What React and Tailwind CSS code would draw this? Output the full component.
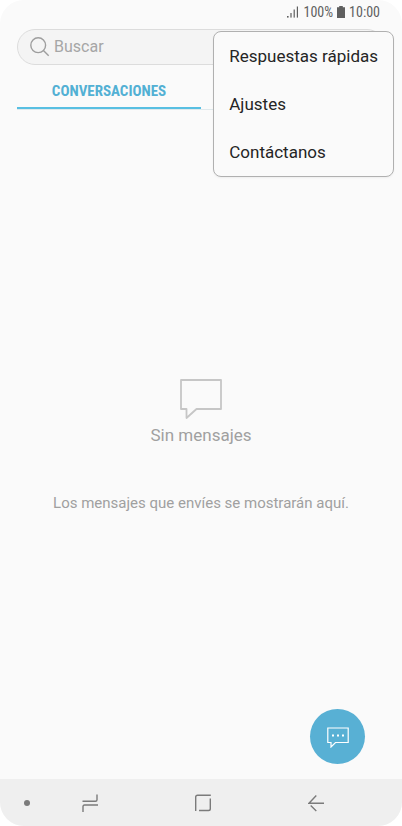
const menuItems = ['Respuestas rápidas', 'Ajustes', 'Contáctanos'];

const StatusBar = () => (
  <header className="flex h-6 items-center justify-end gap-1 pr-[22px] text-sm text-[#5f5f5f] font-['Roboto_Condensed','Roboto',sans-serif]">
    <svg className="h-3 w-3" viewBox="0 0 12 12" fill="currentColor" aria-hidden="true">
      <rect x="0" y="10" width="1.6" height="1.6" />
      <rect x="3.4" y="7" width="1.2" height="4.6" />
      <rect x="6.6" y="3.5" width="1.2" height="8.1" />
      <rect x="9.8" y="0.5" width="1.2" height="11.1" />
    </svg>
    <span>100%</span>
    <svg className="h-3 w-2" viewBox="0 0 8 12" fill="currentColor" aria-hidden="true">
      <path d="M2.2 0h3.6v1.2H8V12H0V1.2h2.2z" />
    </svg>
    <span>10:00</span>
  </header>
);

const SearchBar = () => (
  <label className="mx-[17px] mt-[5px] flex h-9 items-center gap-1 rounded-full border border-[#dcdcdc] bg-[#f4f4f4] pl-3">
    <svg className="h-5 w-5 shrink-0 text-[#9e9e9e]" viewBox="0 0 20 20" fill="none" stroke="currentColor" strokeWidth="1.4" aria-hidden="true">
      <circle cx="8.2" cy="8.2" r="7.4" />
      <path d="M13.4 13.4l5.3 5.3" />
    </svg>
    <input
      type="search"
      aria-label="Buscar"
      placeholder="Buscar"
      className="min-w-0 flex-1 bg-transparent text-base text-[#252525] outline-none placeholder:text-[#a6a6a6]"
    />
  </label>
);

const Tabs = () => (
  <nav className="mx-[17px] flex h-[45px] border-b border-[#dfe9ec]">
    <button type="button" className="w-1/2 border-b-2 border-[#58bfe2] pt-[10px] text-[15px] font-bold text-[#52b0d4] font-['Roboto_Condensed','Roboto',sans-serif]">
      CONVERSACIONES
    </button>
  </nav>
);

const OptionsMenu = () => (
  <ul className="absolute top-[31px] right-2 rounded-lg border border-[#b0b0b0] bg-[#fafafa] shadow-xs">
    {menuItems.map((item) => (
      <li key={item}>
        <button type="button" className="block h-12 w-full px-[15px] pt-[2px] text-left text-[17px] text-[#252525]">
          {item}
        </button>
      </li>
    ))}
  </ul>
);

const EmptyState = () => (
  <main className="flex flex-1 flex-col items-center justify-center pt-1 text-center text-[#a0a0a0]">
    <svg className="h-10 w-[42px] text-[#c6c6c6]" viewBox="0 0 42 40" fill="none" stroke="currentColor" strokeWidth="1.8" strokeLinejoin="round" aria-hidden="true">
      <path d="M1 1h40v29H16.500L6.500 39V30H1z" />
    </svg>
    <h1 className="mt-1 text-[17px] leading-6">Sin mensajes</h1>
    <p className="mt-11 text-[15px] leading-6">Los mensajes que envíes se mostrarán aquí.</p>
  </main>
);

const NavBar = () => (
  <footer className="flex h-[47px] items-center bg-[#efefef] text-[#7b7b7b]">
    <button type="button" aria-label="Ocultar barra" className="flex w-[54px] justify-center">
      <span className="h-[6px] w-[6px] rounded-full bg-current" />
    </button>
    <div className="flex flex-1 justify-between pr-[78px] pl-7">
      <button type="button" aria-label="Recientes">
        <svg className="h-[18px] w-4" viewBox="0 0 16 18" fill="none" stroke="currentColor" strokeWidth="1.4" aria-hidden="true">
          <path d="M0.5 7.3H13.5Q15 7.3 15 5.8V0.5M16 11H2.5Q1 11 1 12.5V18" />
        </svg>
      </button>
      <button type="button" aria-label="Inicio">
        <svg className="h-[18px] w-4" viewBox="0 0 16 18" fill="none" stroke="currentColor" strokeWidth="1.4" aria-hidden="true">
          <path d="M15.8 1.2H2.5Q0.7 1.2 0.7 3V17M4 16.5H13.5Q15.3 16.5 15.3 14.7V4.5" />
        </svg>
      </button>
      <button type="button" aria-label="Atrás">
        <svg className="h-[18px] w-4" viewBox="0 0 16 18" fill="none" stroke="currentColor" strokeWidth="1.4" aria-hidden="true">
          <path d="M16 9.3H1L8.3 1.5M2.7 11.5L8.3 17" />
        </svg>
      </button>
    </div>
  </footer>
);

const App = () => (
  <div className="min-h-screen bg-white font-['Roboto',sans-serif]">
    <div className="relative flex min-h-screen flex-col overflow-hidden rounded-3xl bg-[#fafafa]">
      <StatusBar />
      <SearchBar />
      <Tabs />
      <OptionsMenu />
      <EmptyState />
      <button
        type="button"
        aria-label="Nuevo mensaje"
        className="absolute right-[37px] bottom-[62px] flex h-[55px] w-[55px] items-center justify-center rounded-full bg-[#58b0d4] text-white"
      >
        <svg className="h-[22px] w-[22px]" viewBox="0 0 22 22" fill="none" stroke="currentColor" strokeWidth="1.2" aria-hidden="true">
          <path d="M0.8 2h20.4v14.5H8.5L4 21V16.500H0.800z" />
          <path d="M5 9.500h2M10 9.500h2M15 9.500h2" strokeWidth="2" />
        </svg>
      </button>
      <NavBar />
    </div>
  </div>
);

export default App;
